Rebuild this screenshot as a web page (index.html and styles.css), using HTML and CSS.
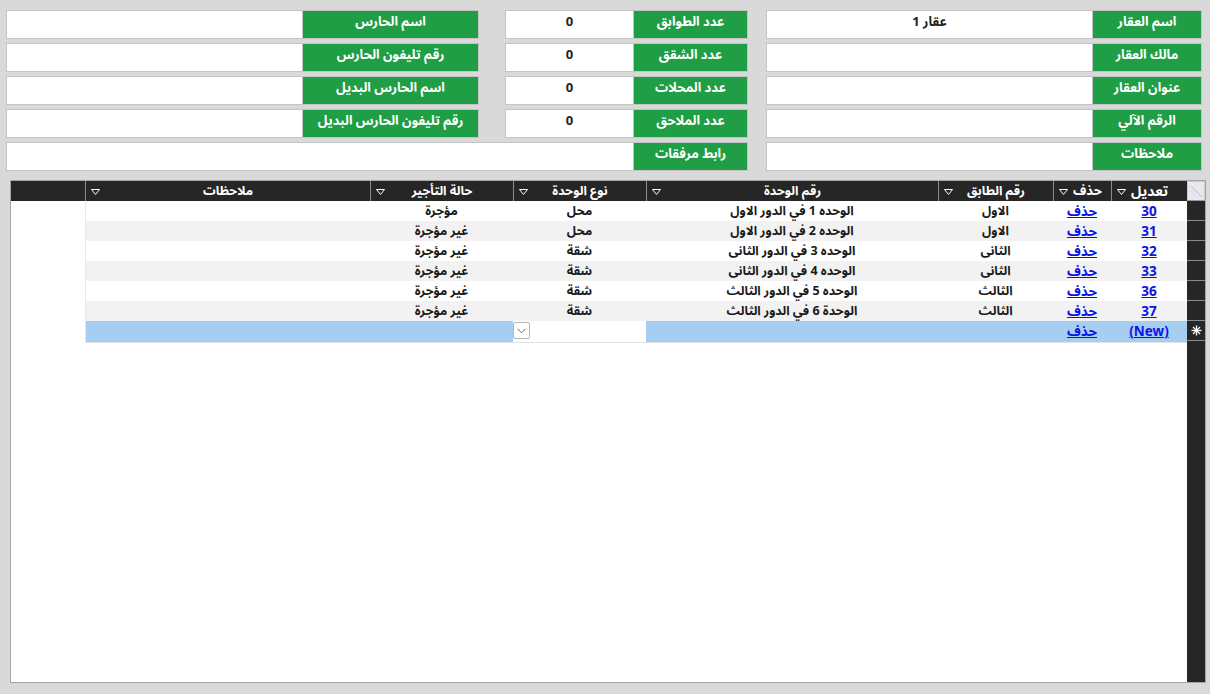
FILE: index.html
```html
<!DOCTYPE html>
<html lang="ar">
<head>
<meta charset="utf-8">
<title>العقار</title>
<link rel="stylesheet" href="styles.css">
</head>
<body>
<div class="form" dir="rtl">
  <div class="lbl c1">اسم العقار</div><div class="val c2">عقار 1</div>
  <div class="lbl c4">عدد الطوابق</div><div class="val c5">0</div>
  <div class="lbl c7">اسم الحارس</div><div class="val c8"></div>

  <div class="lbl c1">مالك العقار</div><div class="val c2"></div>
  <div class="lbl c4">عدد الشقق</div><div class="val c5">0</div>
  <div class="lbl c7">رقم تليفون الحارس</div><div class="val c8"></div>

  <div class="lbl c1">عنوان العقار</div><div class="val c2"></div>
  <div class="lbl c4">عدد المحلات</div><div class="val c5">0</div>
  <div class="lbl c7">اسم الحارس البديل</div><div class="val c8"></div>

  <div class="lbl c1">الرقم الآلي</div><div class="val c2"></div>
  <div class="lbl c4">عدد الملاحق</div><div class="val c5">0</div>
  <div class="lbl c7">رقم تليفون الحارس البديل</div><div class="val c8"></div>

  <div class="lbl c1">ملاحظات</div><div class="val c2"></div>
  <div class="lbl c4">رابط مرفقات</div><div class="val c5w"></div>
</div>

<div class="table" dir="rtl">
  <div class="selcol">
    <div class="sc sc-head">
      <svg width="16" height="18" viewBox="0 0 16 18"><polygon points="3,4 14,15 3,15" fill="#dfe6f1"/><line x1="3" y1="4" x2="14" y2="15" stroke="#a9c3e4" stroke-width="1"/></svg>
    </div>
    <div class="sc"></div>
    <div class="sc"></div>
    <div class="sc"></div>
    <div class="sc"></div>
    <div class="sc"></div>
    <div class="sc"></div>
    <div class="sc sc-new">
      <svg width="11" height="11" viewBox="0 0 11 11" stroke="#fff" stroke-width="1.3"><line x1="5.5" y1="0.5" x2="5.5" y2="10.5"/><line x1="0.5" y1="5.5" x2="10.5" y2="5.5"/><line x1="2" y1="2" x2="9" y2="9"/><line x1="9" y1="2" x2="2" y2="9"/></svg>
    </div>
    <div class="sc sc-rest"></div>
  </div>
  <div class="grid">
    <div class="row hdr">
      <div class="h h-big">تعديل<svg class="flt" width="9" height="6" viewBox="0 0 9 6"><polygon points="0.5,0.5 8.5,0.5 4.5,5.5" fill="none" stroke="#fff"/></svg></div>
      <div class="h h-mid">حذف<svg class="flt" width="9" height="6" viewBox="0 0 9 6"><polygon points="0.5,0.5 8.5,0.5 4.5,5.5" fill="none" stroke="#fff"/></svg></div>
      <div class="h">رقم الطابق<svg class="flt" width="9" height="6" viewBox="0 0 9 6"><polygon points="0.5,0.5 8.5,0.5 4.5,5.5" fill="none" stroke="#fff"/></svg></div>
      <div class="h">رقم الوحدة<svg class="flt" width="9" height="6" viewBox="0 0 9 6"><polygon points="0.5,0.5 8.5,0.5 4.5,5.5" fill="none" stroke="#fff"/></svg></div>
      <div class="h">نوع الوحدة<svg class="flt" width="9" height="6" viewBox="0 0 9 6"><polygon points="0.5,0.5 8.5,0.5 4.5,5.5" fill="none" stroke="#fff"/></svg></div>
      <div class="h">حالة التأجير<svg class="flt" width="9" height="6" viewBox="0 0 9 6"><polygon points="0.5,0.5 8.5,0.5 4.5,5.5" fill="none" stroke="#fff"/></svg></div>
      <div class="h">ملاحظات<svg class="flt" width="9" height="6" viewBox="0 0 9 6"><polygon points="0.5,0.5 8.5,0.5 4.5,5.5" fill="none" stroke="#fff"/></svg></div>
      <div class="h h-fill"></div>
    </div>

    <div class="row dat">
      <div class="d"><a href="#">30</a></div><div class="d"><a href="#">حذف</a></div><div class="d">الاول</div><div class="d">الوحده 1 في الدور الاول</div><div class="d">محل</div><div class="d">مؤجرة</div><div class="d d-note"></div><div class="d d-fill"></div>
    </div>
    <div class="row dat alt">
      <div class="d"><a href="#">31</a></div><div class="d"><a href="#">حذف</a></div><div class="d">الاول</div><div class="d">الوحده 2 في الدور الاول</div><div class="d">محل</div><div class="d">غير مؤجرة</div><div class="d d-note"></div><div class="d d-fill"></div>
    </div>
    <div class="row dat">
      <div class="d"><a href="#">32</a></div><div class="d"><a href="#">حذف</a></div><div class="d">الثانى</div><div class="d">الوحده 3 في الدور الثانى</div><div class="d">شقة</div><div class="d">غير مؤجرة</div><div class="d d-note"></div><div class="d d-fill"></div>
    </div>
    <div class="row dat alt">
      <div class="d"><a href="#">33</a></div><div class="d"><a href="#">حذف</a></div><div class="d">الثانى</div><div class="d">الوحده 4 في الدور الثانى</div><div class="d">شقة</div><div class="d">غير مؤجرة</div><div class="d d-note"></div><div class="d d-fill"></div>
    </div>
    <div class="row dat">
      <div class="d"><a href="#">36</a></div><div class="d"><a href="#">حذف</a></div><div class="d">الثالث</div><div class="d">الوحده 5 في الدور الثالث</div><div class="d">شقة</div><div class="d">غير مؤجرة</div><div class="d d-note"></div><div class="d d-fill"></div>
    </div>
    <div class="row dat alt">
      <div class="d"><a href="#">37</a></div><div class="d"><a href="#">حذف</a></div><div class="d">الثالث</div><div class="d">الوحدة 6 في الدور الثالث</div><div class="d">شقة</div><div class="d">غير مؤجرة</div><div class="d d-note"></div><div class="d d-fill"></div>
    </div>
    <div class="row dat newrow">
      <div class="d"><a href="#">(New)</a></div><div class="d"><a href="#">حذف</a></div><div class="d"></div><div class="d"></div>
      <div class="d d-combo"><span class="combo"><svg width="9" height="6" viewBox="0 0 9 6"><polyline points="0.5,0.8 4.5,4.8 8.5,0.8" fill="none" stroke="#6a6a6a" stroke-width="1"/></svg></span></div>
      <div class="d"></div><div class="d d-note"></div><div class="d d-fill"></div>
    </div>
  </div>
</div>
</body>
</html>
```

FILE: styles.css
```css
body {
  margin: 0;
  background: #d9d9d9;
  font-family: "Noto Sans", "Noto Sans Arabic", "DejaVu Sans", sans-serif;
  color: #1a1a1a;
}

.form {
  display: grid;
  grid-template-columns: 110px 326px 18px 115px 128px 26px 177px 296px;
  grid-auto-rows: 29px;
  row-gap: 4px;
  width: 1196px;
  margin: 10px 0 0 6px;
}

.lbl, .val {
  box-sizing: border-box;
  border: 1px solid #c4c4c4;
  text-align: center;
  font-weight: bold;
  font-size: 13px;
  line-height: 16px;
  padding-top: 2px;
  white-space: nowrap;
}

.lbl {
  background: #1f9e45;
  color: #fff;
}

.val {
  background: #fff;
  border-right: 0;
  color: #222;
}

.c1 { grid-column: 1; }
.c2 { grid-column: 2; }
.c4 { grid-column: 4; }
.c5 { grid-column: 5; }
.c5w { grid-column: 5 / 9; }
.c7 { grid-column: 7; }
.c8 { grid-column: 8; }

.table {
  display: flex;
  box-sizing: border-box;
  width: 1196px;
  height: 503px;
  margin: 9px 0 0 10px;
  border: 1px solid #a3a3a3;
  background: #fff;
}

.selcol {
  width: 18px;
  flex: none;
  background: #262626;
  display: flex;
  flex-direction: column;
}

.sc {
  height: 20px;
  box-sizing: border-box;
  border-bottom: 1px solid #8a8a8a;
  flex: none;
  display: flex;
  align-items: center;
  justify-content: center;
}

.sc-head {
  background: #e8e8ec;
  border: 1px solid #c9c9cf;
  border-bottom: 1px solid #9a9a9a;
}

.sc-rest {
  flex: 1;
  border-bottom: 0;
}

.grid {
  flex: 1;
  display: flex;
  flex-direction: column;
}

.row {
  display: grid;
  grid-template-columns: 76px 58px 115px 292px 133px 143px 285px 1fr;
  height: 20px;
}

.hdr {
  background: #262626;
  color: #fff;
}

.h {
  position: relative;
  box-sizing: border-box;
  border-left: 1px solid #8c8c8c;
  text-align: center;
  font-weight: bold;
  font-size: 12.5px;
  line-height: 19px;
  white-space: nowrap;
}

.h-big {
  font-size: 14px;
}

.h-mid {
  font-size: 13px;
  padding-left: 10px;
}

.h-fill {
  border-left: 0;
}

.flt {
  position: absolute;
  left: 5px;
  top: 8px;
}

.d {
  text-align: center;
  font-weight: bold;
  font-size: 12.5px;
  line-height: 20px;
  white-space: nowrap;
  background: #fff;
  box-sizing: border-box;
}

.alt .d {
  background: #f2f2f2;
}

.d-note {
  border-left: 1px solid #ebe8dc;
}

.row .d-fill {
  background: #fff;
}

.d a {
  color: #0a14e6;
  text-decoration: underline;
  font-size: 13.5px;
}

.newrow .d {
  background: #a6cef0;
  border-bottom: 1px solid #e2e2e2;
}

.newrow .d-combo {
  background: #fff;
  display: flex;
  justify-content: flex-end;
  padding: 1px 1px 0 0;
}

.newrow .d-fill {
  background: #fff;
  border-bottom: 0;
}

.combo {
  width: 17px;
  height: 17px;
  box-sizing: border-box;
  border: 1px solid #b4b4b4;
  border-radius: 2px;
  background: #fff;
  display: flex;
  align-items: center;
  justify-content: center;
}
```
